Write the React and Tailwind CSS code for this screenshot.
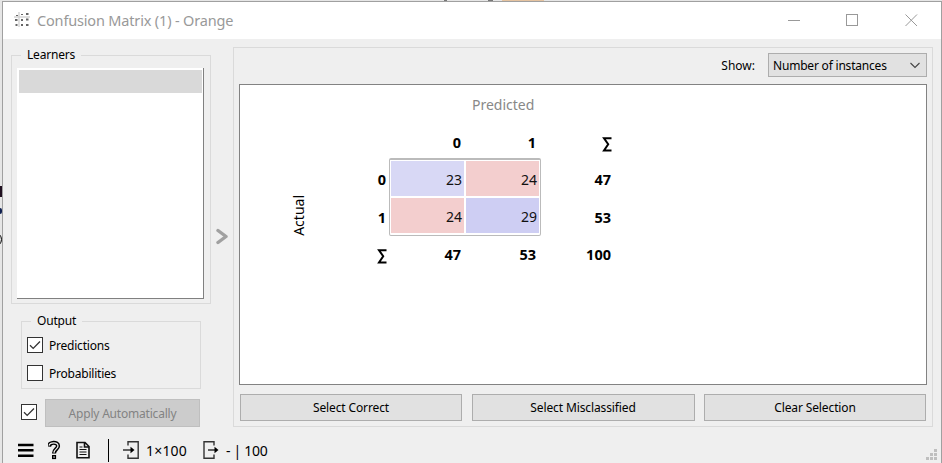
import React from "react";

function Check({ checked }) {
  return (
    <span className="flex h-4 w-4 shrink-0 items-center justify-center border border-[#333] bg-white">
      {checked && (
        <svg width="14" height="14" viewBox="0 0 14 14" fill="none" stroke="#333" strokeWidth="1.3">
          <path d="M2 7.2 L5.2 10.4 L12 3.5" />
        </svg>
      )}
    </span>
  );
}

function Legend({ children }) {
  return (
    <legend className="ml-[9px] h-4 px-[6px] text-[12px] leading-4 tracking-[-0.2px]">{children}</legend>
  );
}

function Button({ children }) {
  return (
    <button className="flex h-[27px] items-center justify-center border border-[#adadad] bg-[#e1e1e1] text-[12px] leading-4 tracking-[-0.12px]">
      {children}
    </button>
  );
}

function Head({ children }) {
  return <div className="flex items-center justify-end pr-[3px] pt-[5px] text-[14.5px] font-bold">{children}</div>;
}

function Sigma() {
  return (
    <svg width="10" height="15" viewBox="0 0 10 15" className="-mr-px mt-[3px]" fill="none" stroke="#000" strokeWidth="2">
      <path d="M9.5 1.2 H2 L6.2 7.2 L2 13.5 H9.5" />
    </svg>
  );
}

function Cell({ color, children }) {
  return (
    <div className={`flex items-center justify-end pr-[2px] pt-[2px] text-[#111] ${color}`}>{children}</div>
  );
}

function TitleBar() {
  return (
    <header className="flex h-[37px] shrink-0 items-center bg-white text-[#999]">
      <svg className="-mt-[2px] ml-[11px]" width="16" height="16" viewBox="0 0 16 16">
        <path d="M5 0V15M0 5H16" stroke="#d4d4d4" strokeWidth="1.4" />
        <g fill="#666">
          <path d="M2 3h2v1H2zM7 2h2v1H7zM12 1h2.5v2h-2.5zM1 7h2.5v2H1zM7 7h2v2H7zM12 6.5h2.5v2h-2.5zM1.500 12h2v2h-2zM7 12h2v2H7zM12 12h2.500v2h-2.500z" />
        </g>
      </svg>
      <span className="-mt-[2px] ml-[7px] w-[198px] whitespace-nowrap text-[14.5px] leading-5 tracking-[-0.17px]">Confusion Matrix (1) - Orange</span>
      <svg className="-mt-[2px] ml-auto mr-[23px]" width="130" height="14" viewBox="0 0 130 14" fill="none" stroke="#999">
        <path d="M0 7.5H12M117.5 1.5L129 13M129 1.5L117.5 13" />
        <rect x="58.5" y="1.5" width="11" height="11" />
      </svg>
    </header>
  );
}

function Sidebar() {
  return (
    <aside className="w-[208px] shrink-0 pl-2 pt-[8px]">
      <fieldset className="h-[257px] w-[200px] border border-[#dadada]">
        <Legend>Learners</Legend>
        <div className="ml-[5px] mt-[5px] h-[231px] w-[187px] border-b border-r border-[#808080] bg-white pl-[2px] pt-[2px]">
          <div className="h-[23px] w-[183px] bg-[#d9d9d9]" />
        </div>
      </fieldset>
      <fieldset className="ml-[10px] mt-[9px] h-[76px] w-[180px] border border-[#dadada]">
        <Legend>Output</Legend>
        <div className="ml-[5px] mt-[8px] flex flex-col gap-3 text-[12px] leading-[18px] tracking-[-0.22px]">
          <div className="flex h-4 gap-[6px]"><Check checked />Predictions</div>
          <div className="flex h-4 gap-[6px]"><Check />Probabilities</div>
        </div>
      </fieldset>
      <div className="ml-[10px] mt-[10px] flex items-center gap-2">
        <span className="-mt-[2px]"><Check checked /></span>
        <button className="h-7 w-[155px] border border-[#bfbfbf] bg-[#ccc] pt-px text-[12px] leading-4 tracking-[-0.2px] text-[#838383]">Apply Automatically</button>
      </div>
    </aside>
  );
}

function Matrix() {
  return (
    <div className="h-[301px] w-[688px] border border-[#828282] bg-white text-[14px]">
      <div className="flex h-[38px] items-center pl-[232px] text-[#888]">Predicted</div>
      <div className="flex">
        <div className="flex h-[150px] w-[119px] items-center justify-end pr-[50px] pt-[35px]">
          <span className="-rotate-180 [writing-mode:vertical-rl]">Actual</span>
        </div>
        <div className="grid h-[150px] grid-cols-[30px_75px_75px_75px] grid-rows-[35px_38px_38px_37px]">
          <Head /><Head>0</Head><Head>1</Head><Head><Sigma /></Head>
          <Head>0</Head>
          <div className="col-span-2 row-span-2 grid h-[78px] w-[152px] grid-cols-[73px_73px] grid-rows-[35px_35px] gap-[2px] rounded-[2px] border border-t-2 border-[#bbb] p-px">
            <Cell color="bg-[#d8d8f5]">23</Cell>
            <Cell color="bg-[#f3cece]">24</Cell>
            <Cell color="bg-[#f3cece]">24</Cell>
            <Cell color="bg-[#cecef3]">29</Cell>
          </div>
          <Head>47</Head>
          <Head>1</Head><Head>53</Head>
          <Head><Sigma /></Head><Head>47</Head><Head>53</Head><Head>100</Head>
        </div>
      </div>
    </div>
  );
}

function StatusBar() {
  return (
    <footer className="flex h-9 shrink-0 items-center pl-[15px] pt-[10px] text-[14px] leading-5">
      <svg width="16" height="20" viewBox="0 0 16 20" stroke="#000" strokeWidth="2.4">
        <path d="M0 5H15.500M0 10.3H15.500M0 15.700H15.500" />
      </svg>
      <svg className="ml-[14px]" width="13" height="20" viewBox="0 0 13 20" fill="none">
        <path d="M1 6.500C1.300 1.600 10 1.600 10 6C10 9 6 9.300 6 13.500" stroke="#000" strokeWidth="4.2" />
        <path d="M1 5.700C2 1.900 10 1.900 10 6C10 9 6 9.300 6 12.700" stroke="#efefef" strokeWidth="1.3" />
        <rect x="4.700" y="15.700" width="2.700" height="2.700" fill="#efefef" stroke="#000" strokeWidth="1.4" />
      </svg>
      <svg className="ml-[15px]" width="14" height="20" viewBox="0 0 14 20" fill="none" stroke="#111">
        <path d="M1 2.500H9L13 6.500V17.800H1ZM8.500 2.500V7H13" strokeWidth="1.6" />
        <path d="M3.500 7H6.500M3.500 9.500H10.500M3.500 12H10.500M3.500 14.500H10.500" strokeWidth="1" />
      </svg>
      <span className="ml-[18px] h-[23px] w-px bg-black" />
      <svg className="ml-[14px]" width="17" height="20" viewBox="0 0 17 20" fill="none" stroke="#333" strokeWidth="1.4">
        <path d="M5 5.5V1.7H15.2V18.3H5V14.5M0 10H9" />
        <path d="M7.5 6.8L11.5 10L7.5 13.2Z" fill="#000" stroke="none" />
      </svg>
      <span className="ml-[6px] w-[43px] whitespace-nowrap pt-px tracking-[0.2px]">1×100</span>
      <svg className="ml-[14px]" width="17" height="20" viewBox="0 0 17 20" fill="none" stroke="#333" strokeWidth="1.4">
        <path d="M11 5.5V1.7H1V18.3H11V14.5M5 10H13" />
        <path d="M11.5 6.8L15.5 10L11.5 13.2Z" fill="#000" stroke="none" />
      </svg>
      <span className="ml-[6px] whitespace-nowrap pt-px tracking-[-0.3px]">- | 100</span>
      <svg className="ml-auto mr-[3px] mt-[10px]" width="12" height="12" viewBox="0 0 12 12" fill="#bfbfbf">
        <path d="M8 0h3v3H8zM4 4h3v3H4zM8 4h3v3H8zM0 8h3v3H0zM4 8h3v3H4zM8 8h3v3H8z" />
      </svg>
    </footer>
  );
}

export default function App() {
  return (
    <div className="relative h-[463px] w-[942px] overflow-hidden bg-[#e6e6e6] pl-[2px] pt-px font-['Noto_Sans','Open_Sans',sans-serif] text-black">
      <div className="absolute left-[502px] top-0 h-px w-[42px] bg-[#e5c3a0]" />
      <div className="absolute left-[444px] top-0 h-px w-[3px] bg-[#777]" />
      <div className="absolute left-[488px] top-0 h-px w-[5px] bg-[#777]" />
      <div className="absolute left-0 top-[186px] h-[11px] w-[2px] bg-[#201020]" />
      <div className="absolute left-0 top-[208px] h-[6px] w-[2px] rounded-r bg-[#102050]" />
      <div className="absolute -left-[8px] top-[232px] h-[15px] w-[10px] rounded-r-full border border-black" />
      <div className="flex h-[462px] w-[940px] flex-col border-l border-r border-t border-[#a0a0a0] bg-[#efefef]">
        <TitleBar />
        <div className="flex h-[388px] shrink-0">
          <Sidebar />
          <div className="flex w-[22px] items-center pl-[5px] pt-[6px]">
            <svg width="13" height="17" viewBox="0 0 13 17" fill="none" stroke="#a0a0a0" strokeWidth="3.4" strokeLinecap="round" strokeLinejoin="round">
              <path d="M2 2.5L10 8.5L2 14.5" />
            </svg>
          </div>
          <main className="mt-[8px] h-[380px] w-[700px] border border-[#dadada] pl-[5px] pt-[5px]">
            <div className="flex h-6 w-[688px] items-center justify-end text-[12px] leading-4 tracking-[-0.2px]">
              <span className="mr-[13px] pt-[2px] tracking-normal">Show:</span>
              <div className="flex h-6 w-[159px] items-center justify-between border border-[#adadad] bg-[#e1e1e1] pl-1 pr-[6px]">
                <span className="whitespace-nowrap pt-[2px]">Number of instances</span>
                <svg width="10" height="7" viewBox="0 0 10 7" fill="none" stroke="#444" strokeWidth="1.1">
                  <path d="M.5 1L5 5.5L9.5 1" />
                </svg>
              </div>
            </div>
            <div className="mt-[7px]"><Matrix /></div>
            <div className="ml-px mt-[9px] grid w-[686px] grid-cols-[222px_223px_222px] justify-between">
              <Button>Select Correct</Button>
              <Button>Select Misclassified</Button>
              <Button>Clear Selection</Button>
            </div>
          </main>
        </div>
        <StatusBar />
      </div>
    </div>
  );
}
